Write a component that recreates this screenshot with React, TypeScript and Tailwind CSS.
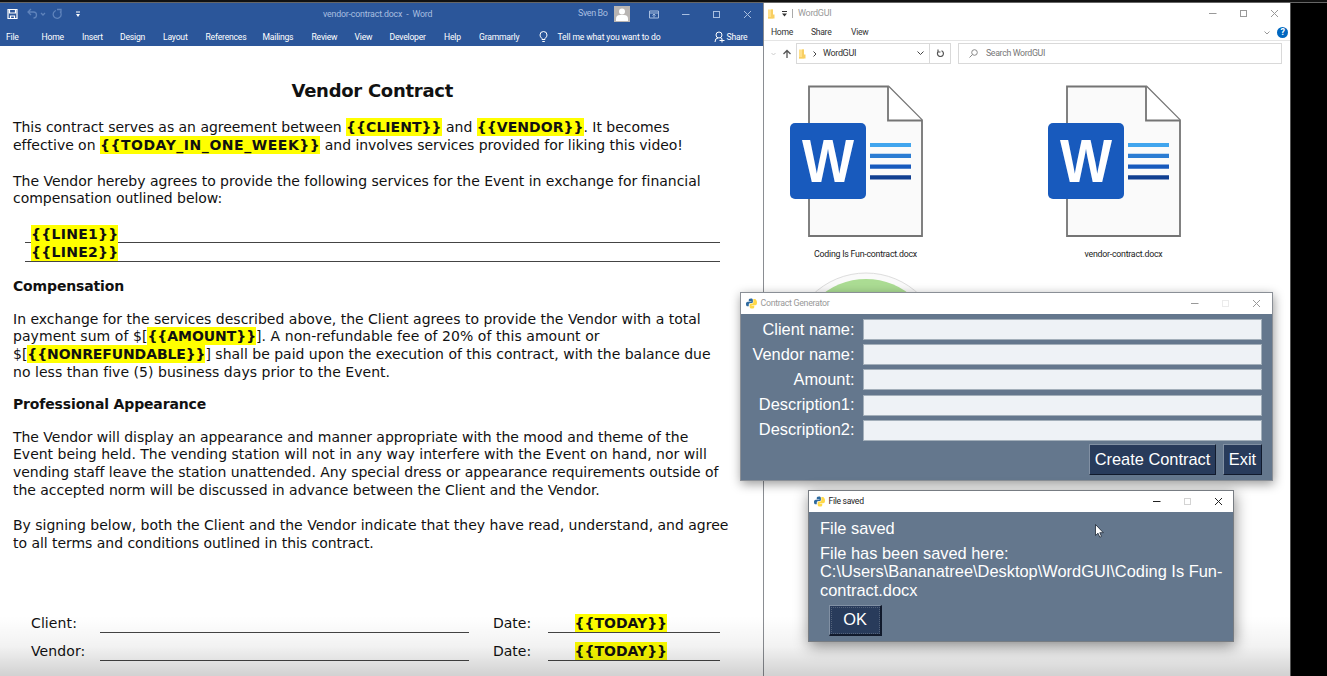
import type { ReactNode } from "react";

const ribbonTabs = [
  { label: "File", width: "w-[35.5px]" },
  { label: "Home", width: "w-[40.5px]" },
  { label: "Insert", width: "w-[38px]" },
  { label: "Design", width: "w-[43px]" },
  { label: "Layout", width: "w-[42.5px]" },
  { label: "References", width: "w-[57px]" },
  { label: "Mailings", width: "w-[49px]" },
  { label: "Review", width: "w-[43px]" },
  { label: "View", width: "w-[35px]" },
  { label: "Developer", width: "w-[54.5px]" },
  { label: "Help", width: "w-[35px]" },
  { label: "Grammarly", width: "w-[60px]" },
];

const fields = ["Client name:", "Vendor name:", "Amount:", "Description1:", "Description2:"];

function Tag({ children, className = "" }: { children: ReactNode; className?: string }) {
  return <b className={`bg-[#ffff00] py-[1px] ${className}`}>{children}</b>;
}

function Line({ children, className = "" }: { children: ReactNode; className?: string }) {
  return <div className={`whitespace-pre ${className}`}>{children}</div>;
}

function WindowButtons({ className, maxClass = "" }: { className: string; maxClass?: string }) {
  return (
    <svg width="70" height="9" viewBox="0 0 70 9" fill="none" stroke="currentColor" className={className}>
      <path d="M0 4.5h7.5" />
      <rect x="31.5" y="1.5" width="6" height="6" className={maxClass} />
      <path d="M62 1l7 7M69 1l-7 7" />
    </svg>
  );
}

function FolderIcon() {
  return (
    <svg width="7" height="10" viewBox="0 0 7 10">
      <path d="M0 .5h5v9H0z" fill="#ffe08a" />
      <path d="M3 .5h2v5h1.5v4H0V8h3z" fill="#f8cf63" />
    </svg>
  );
}

function PythonIcon() {
  return (
    <svg width="11" height="11" viewBox="0 0 24 24">
      <path
        d="M11 1C6 1 6 3 6 5v2h6v1H4C1 8 0 10 0 13s1 5 4 5h2v-3c0-2 1-4 4-4h2c2 0 3-1 3-3V5c0-3-1-4-4-4z"
        fill="#2f6a9f"
      />
      <path
        d="M13 23c5 0 5-2 5-4v-2h-6v-1h8c3 0 4-2 4-6s-2-8-5-8h-3v6c0 3-1 4-4 4s-4 1-4 3v4c0 3 2 4 5 4z"
        fill="#ffd848"
      />
    </svg>
  );
}

function WordFile({ name }: { name: string }) {
  return (
    <div className="flex w-[150px] flex-col items-center">
      <svg width="134" height="152" viewBox="0 0 134 152">
        <path d="M20 1.500h79.500l33.500 33.500v116H20z" fill="#fafafa" stroke="#747474" strokeWidth="1.8" />
        <path d="M99 1.500v34h34" fill="#fff" stroke="#747474" strokeWidth="1.8" />
        <rect x="1" y="38" width="76" height="76" rx="5" fill="#185abd" />
        <text
          x="13"
          y="97"
          fontSize="61"
          fontWeight="700"
          fill="#fff"
          textLength="52"
          lengthAdjust="spacingAndGlyphs"
          fontFamily="Liberation Sans, Arial, sans-serif"
        >
          W
        </text>
        <path d="M81 60h41" stroke="#41a5ee" strokeWidth="4.2" />
        <path d="M81 70.8h41" stroke="#2b7cd3" strokeWidth="4.2" />
        <path d="M81 81.6h41" stroke="#185abd" strokeWidth="4.2" />
        <path d="M81 92.4h41" stroke="#103f91" strokeWidth="4.2" />
      </svg>
      <span className="mt-[9.500px] ml-[19px] text-[8.800px] leading-[14px] tracking-[-0.25px] whitespace-nowrap text-[#222]">
        {name}
      </span>
    </div>
  );
}

function WordWindow() {
  return (
    <section className="flex h-full w-[764px] shrink-0 flex-col border-r border-[#8a8d92] bg-white">
      <header className="h-[43px] shrink-0 bg-[#2b569a] text-white">
        <div className="flex h-[22px] items-center text-[9px] whitespace-nowrap text-[#a9bfe0]">
          <svg width="90" height="12" viewBox="0 0 90 12" fill="none" className="ml-[7px]">
            <path d="M1 1.500h9v9H1zM2.500 1.500v3.500h6V1.500M3.500 10.500V8h4v2.500" stroke="#fff" strokeWidth="1.2" />
            <path d="M24 1l-3 3 3 3M21.500 4h5q3 0 3 3t-3 3M34 5l2 2 2-2" stroke="#5f83bb" strokeWidth="1.3" />
            <path d="M49 2.500a4 4 0 1 0 4 1M50 1.500h4v3" stroke="#5f83bb" strokeWidth="1.3" />
            <path d="M69 4h4" stroke="#fff" />
            <path d="M69 6h4l-2 3z" fill="#fff" />
          </svg>
          <span className="ml-[226px] w-[255px] pt-px text-[8.800px] tracking-[-0.18px] whitespace-pre">
            vendor-contract.docx  -  Word
          </span>
          <span className="w-[36px] tracking-[-0.4px]">Sven Bo</span>
          <svg width="16" height="16" viewBox="0 0 16 16">
            <path d="M0 0h16v16H0z" fill="#b9b5b3" />
            <circle cx="8" cy="5.500" r="3" fill="#fff" />
            <path d="M2 15V13q0-4 4-4h4q4 0 4 4v2z" fill="#fff" />
          </svg>
          <svg width="10" height="9" viewBox="0 0 10 9" fill="none" stroke="currentColor" className="ml-[19px]">
            <path d="M.5 1h9v7h-9zM.5 3h9M5 7.500V4M3.500 5.500L5 4l1.500 1.500" />
          </svg>
          <WindowButtons className="ml-[23px] text-[#a9bfe0]" />
        </div>
        <nav className="flex h-[21px] items-center pt-[3px] pl-[6px] text-[8.600px] tracking-[-0.2px] whitespace-nowrap">
          {ribbonTabs.map((tab) => (
            <span key={tab.label} className={tab.width}>
              {tab.label}
            </span>
          ))}
          <svg width="9" height="12" viewBox="0 0 9 12" fill="none" stroke="#fff">
            <path d="M3 8.500V7.500Q1 6 1 4a3.500 3.500 0 0 1 7 0q0 2-2 3.500v1zM3.300 10.500h2.500" />
          </svg>
          <span className="ml-[9.500px] w-[156px] tracking-[-0.14px]">Tell me what you want to do</span>
          <svg width="11" height="12" viewBox="0 0 11 12" fill="none" stroke="#fff">
            <circle cx="5" cy="4" r="3" />
            <path d="M1 11q0-4 3-4M6.500 7l1.500 1M5.500 9.500h5M8 7.500v4" />
          </svg>
          <span className="ml-[2px]">Share</span>
        </nav>
      </header>
      <article className="flex-1 pl-[13px] font-['DejaVu_Sans','Liberation_Sans',sans-serif] text-[14px] leading-[17.700px] text-[#111]">
        <h1 className="mt-[33.700px] pl-[278.500px] text-[18px] leading-[22px] font-bold tracking-[-0.28px]">Vendor Contract</h1>
        <div className="mt-[17.800px]">
          <Line className="tracking-[-0.03px]">
            This contract serves as an agreement between <Tag className="tracking-[0.05px]">{"{{CLIENT}}"}</Tag> and{" "}
            <Tag className="tracking-[0.05px]">{"{{VENDOR}}"}</Tag>. It becomes
          </Line>
          <Line className="tracking-[-0.04px]">
            effective on <Tag className="tracking-[0.54px]">{"{{TODAY_IN_ONE_WEEK}}"}</Tag> and involves services provided for
            liking this video!
          </Line>
        </div>
        <div className="mt-[17.700px]">
          <Line className="tracking-[-0.02px]">
            The Vendor hereby agrees to provide the following services for the Event in exchange for financial
          </Line>
          <Line className="tracking-[-0.04px]">compensation outlined below:</Line>
        </div>
        <div className="mt-[17.200px] ml-[12px] w-[695px] tracking-[0.27px]">
          <div className="h-[18px] border-b border-[#444] pt-[0.500px] pl-[6px]">
            <Tag>{"{{LINE1}}"}</Tag>
          </div>
          <div className="h-[18.500px] border-b border-[#444] pt-[0.800px] pl-[6px]">
            <Tag>{"{{LINE2}}"}</Tag>
          </div>
        </div>
        <h2 className="mt-[16.300px] font-bold tracking-[-0.15px]">Compensation</h2>
        <div className="mt-[15px]">
          <Line>In exchange for the services described above, the Client agrees to provide the Vendor with a total</Line>
          <Line className="tracking-[0.06px]">
            payment sum of $[<Tag className="tracking-[-0.05px]">{"{{AMOUNT}}"}</Tag>]. A non-refundable fee of 20% of this amount
            or
          </Line>
          <Line className="tracking-[-0.01px]">
            $[<Tag className="tracking-[-0.1px]">{"{{NONREFUNDABLE}}"}</Tag>] shall be paid upon the execution of this contract,
            with the balance due
          </Line>
          <Line className="tracking-[0.04px]">no less than five (5) business days prior to the Event.</Line>
        </div>
        <h2 className="mt-[14.500px] font-bold tracking-[-0.15px]">Professional Appearance</h2>
        <div className="mt-[15px]">
          <Line className="tracking-[-0.03px]">
            The Vendor will display an appearance and manner appropriate with the mood and theme of the
          </Line>
          <Line>Event being held. The vending station will not in any way interfere with the Event on hand, nor will</Line>
          <Line className="tracking-[-0.04px]">
            vending staff leave the station unattended. Any special dress or appearance requirements outside of
          </Line>
          <Line className="tracking-[-0.03px]">
            the accepted norm will be discussed in advance between the Client and the Vendor.
          </Line>
        </div>
        <div className="mt-[17.700px]">
          <Line className="tracking-[-0.01px]">
            By signing below, both the Client and the Vendor indicate that they have read, understand, and agree
          </Line>
          <Line className="tracking-[-0.04px]">to all terms and conditions outlined in this contract.</Line>
        </div>
        <div className="mt-[62px] ml-[18px] flex flex-col gap-[10px]">
          {["Client:", "Vendor:"].map((party) => (
            <div key={party} className="flex h-[18px]">
              <span className="w-[69px] tracking-[0.1px]">{party}</span>
              <span className="w-[369px] border-b border-[#444]" />
              <span className="ml-[24px] w-[55px]">Date:</span>
              <span className="w-[172px] border-b border-[#444] pl-[26.500px]">
                <Tag>{"{{TODAY}}"}</Tag>
              </span>
            </div>
          ))}
        </div>
      </article>
    </section>
  );
}

function ExplorerWindow() {
  return (
    <section className="flex h-full w-[527px] shrink-0 flex-col border-r border-[#555] bg-white text-[9px] text-[#333]">
      <div className="flex h-[21px] shrink-0 items-center pl-[4px]">
        <FolderIcon />
        <svg width="5" height="6" viewBox="0 0 5 6" className="ml-[7px]">
          <path d="M0 0h5v1H0zM0 2.500h5L2.500 5.500z" fill="#333" />
        </svg>
        <span className="ml-[5px] h-[9px] w-px bg-[#aaa]" />
        <span className="ml-[5px] w-[411px] tracking-[-0.3px] text-[#999]">WordGUI</span>
        <WindowButtons className="text-[#999]" />
      </div>
      <nav className="flex h-[17px] shrink-0 items-center border-b border-[#e5e5e5] pt-px pl-[7px] text-[8.600px] tracking-[-0.3px]">
        <span className="w-[40px]">Home</span>
        <span className="w-[40px]">Share</span>
        <span className="w-[413px]">View</span>
        <svg width="6" height="4" viewBox="0 0 6 4" fill="none" stroke="#999">
          <path d="M.5 .5L3 3 5.500 .5" />
        </svg>
        <span className="ml-[7px] flex size-[11px] items-center justify-center rounded-full bg-[#0067c0] text-[9px] font-bold text-white">
          ?
        </span>
      </nav>
      <div className="mt-[2px] flex h-[21px] shrink-0 items-center pl-[7px]">
        <svg width="21" height="10" viewBox="0 0 21 10" fill="none" stroke="#ccc">
          <path d="M.5 4L2.500 6l2-2" />
          <path d="M16 9V1.500M12.500 5L16 1.500 19.500 5" stroke="#555" strokeWidth="1.3" />
        </svg>
        <div className="ml-[4px] flex h-full w-[155px] items-center border border-[#d9d9d9] pl-[2px]">
          <FolderIcon />
          <svg width="4" height="6" viewBox="0 0 4 6" fill="none" stroke="#444" className="ml-[7px]">
            <path d="M.5 .5L3 3 .5 5.500" />
          </svg>
          <span className="ml-[6px] w-[94px] tracking-[-0.35px]">WordGUI</span>
          <svg width="7" height="5" viewBox="0 0 7 5" fill="none" stroke="#444">
            <path d="M.5 .5l3 3 3-3" />
          </svg>
          <span className="ml-[5px] flex h-full flex-1 items-center justify-center border-l border-[#d9d9d9]">
            <svg width="9" height="9" viewBox="0 0 9 9" fill="none" stroke="#555" strokeWidth="1.2">
              <path d="M5.500 1.700A3 3 0 1 1 2.200 2.500M2 .5v2.500h2.500" />
            </svg>
          </span>
        </div>
        <div className="ml-[7px] flex h-full w-[324px] items-center border border-[#d9d9d9] pl-[10px] text-[8.800px] tracking-[-0.35px] text-[#777]">
          <svg width="9" height="9" viewBox="0 0 9 9" fill="none" stroke="#888">
            <circle cx="5.500" cy="3.500" r="2.800" />
            <path d="M3.500 5.500L.5 8.500" />
          </svg>
          <span className="ml-[8px]">Search WordGUI</span>
        </div>
      </div>
      <div className="mt-[21px] grid grid-cols-[258px_258px] pl-[17px]">
        <WordFile name="Coding Is Fun-contract.docx" />
        <WordFile name="vendor-contract.docx" />
      </div>
      <svg width="154" height="40" viewBox="0 0 154 40" className="mt-[11px] ml-[24.500px]">
        <circle cx="77" cy="77.500" r="76.500" fill="#fafafa" stroke="#ddd" />
        <circle cx="77" cy="77" r="70" fill="#abdc93" />
      </svg>
    </section>
  );
}

function ContractGenerator() {
  return (
    <section className="absolute top-[292px] left-[740px] flex h-[189px] w-[533px] flex-col border border-[#8a8f96] bg-[#64778d] shadow-[1px_3px_10px_rgba(0,0,0,0.4)]">
      <div className="flex h-[21px] shrink-0 items-center bg-white pl-[5px] text-[8.800px] text-[#999]">
        <PythonIcon />
        <span className="ml-[3.500px] w-[430.500px] tracking-[-0.3px]">Contract Generator</span>
        <WindowButtons className="text-[#999]" maxClass="opacity-20" />
      </div>
      <div className="flex flex-col gap-[4.200px] pt-[5px] pl-[9px] font-['Liberation_Sans',Arial,sans-serif] text-[16.400px] text-white">
        {fields.map((field) => (
          <label key={field} className="flex h-[21px] items-center">
            <span className="w-[104.500px] pb-[1px] text-right leading-[19px] whitespace-nowrap">{field}</span>
            <input className="ml-[8.500px] h-[21px] w-[399px] border border-[#a3afba] bg-[#eef2f6]" />
          </label>
        ))}
      </div>
      <div className="mt-[3.500px] flex justify-end gap-[7px] pr-[10px] font-['Liberation_Sans',Arial,sans-serif] text-[16.400px] text-white">
        <button className="h-[31px] w-[127px] border border-t-[#8190a3] border-r-[#111a2c] border-b-[#111a2c] border-l-[#8190a3] bg-[#283b5b] whitespace-nowrap">
          Create Contract
        </button>
        <button className="h-[31px] w-[39px] border border-t-[#8190a3] border-r-[#111a2c] border-b-[#111a2c] border-l-[#8190a3] bg-[#283b5b]">
          Exit
        </button>
      </div>
    </section>
  );
}

function FileSavedPopup() {
  return (
    <section className="absolute top-[490px] left-[808px] flex h-[152px] w-[426px] flex-col border border-[#777c82] bg-[#64778d] shadow-[1px_4px_14px_rgba(0,0,0,0.45)]">
      <div className="flex h-[21px] shrink-0 items-center bg-white pl-[5px] text-[8.600px] text-[#222]">
        <PythonIcon />
        <span className="ml-[3.500px] w-[324.500px] tracking-[-0.3px]">File saved</span>
        <WindowButtons className="text-[#222]" maxClass="opacity-20" />
      </div>
      <div className="pt-[7px] pl-[11px] font-['Liberation_Sans',Arial,sans-serif] text-[16.400px] leading-[18.400px] whitespace-nowrap text-white">
        <p>File saved</p>
        <p className="mt-[6.500px]">
          File has been saved here:
          <br />
          C:\Users\Bananatree\Desktop\WordGUI\Coding Is Fun-
          <br />
          contract.docx
        </p>
        <button className="mt-[5.500px] ml-[9px] h-[31px] w-[53px] border border-t-[#8190a3] border-r-2 border-r-[#111a2c] border-b-2 border-b-[#111a2c] border-l-[#8190a3] bg-[#283b5b] outline-1 -outline-offset-3 outline-dotted outline-[#53627a]">
          OK
        </button>
      </div>
    </section>
  );
}

export default function App() {
  return (
    <main className="relative flex h-[676px] w-[1327px] flex-col overflow-hidden bg-black font-['Roboto','Open_Sans',sans-serif]">
      <div className="h-[3px] shrink-0 border-b border-[#666] bg-[#111]" />
      <div className="flex min-h-0 flex-1">
        <WordWindow />
        <ExplorerWindow />
      </div>
      <div className="pointer-events-none absolute bottom-0 left-0 h-[60px] w-[1290px] bg-linear-to-b from-transparent via-black/5 to-black/18" />
      <ContractGenerator />
      <FileSavedPopup />
      <svg width="9" height="14" viewBox="0 0 9 14" className="absolute top-[524px] left-[1095px]">
        <path d="M.5 .5v11l2.500-2.300 1.800 4 1.700-.8-1.700-3.700h3.500z" fill="#fff" stroke="#1c2633" strokeWidth=".8" />
      </svg>
    </main>
  );
}
